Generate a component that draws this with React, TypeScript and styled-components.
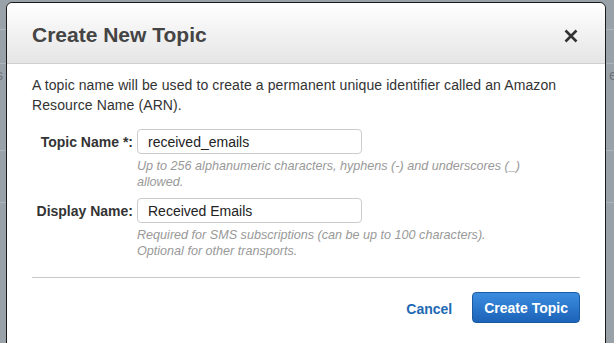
import React from "react";
import styled, { createGlobalStyle } from "styled-components";

const GlobalStyle = createGlobalStyle`
  html, body {
    margin: 0;
    padding: 0;
    background: #9aa2a9;
    font-family: "Liberation Sans", Arial, sans-serif;
  }
`;

const Backdrop = styled.div`
  position: relative;
  width: 614px;
  height: 343px;
  overflow: hidden;
  background-color: #9aa2a9;
  background-image:
    linear-gradient(#aeb4ba, #aeb4ba),
    linear-gradient(#aeb4ba, #aeb4ba),
    linear-gradient(#aeb4ba, #aeb4ba),
    linear-gradient(#aeb4ba, #aeb4ba);
  background-repeat: no-repeat;
  background-size: 100% 1px;
  background-position: 0 29px, 0 63px, 0 150px, 0 202px;
`;

const GhostText = styled.span<{ $left: number }>`
  position: absolute;
  top: 67px;
  left: ${(p) => p.$left}px;
  font-size: 14px;
  color: #6d747a;
`;

const Modal = styled.div`
  position: absolute;
  left: 6px;
  top: 2px;
  width: 600px;
  height: 360px;
  background: #fff;
  border: 1px solid #1a1a1a;
  border-radius: 6px 6px 0 0;
  box-sizing: border-box;
  display: flex;
  flex-direction: column;
`;

const Header = styled.div`
  height: 60px;
  display: flex;
  align-items: center;
  justify-content: space-between;
  padding: 0 26px 0 25px;
  background: linear-gradient(#ffffff, #e5e5e5);
  border-bottom: 1px solid #cfcfcf;
  border-radius: 6px 6px 0 0;
`;

const Title = styled.h2`
  margin: 0;
  padding-top: 3px;
  font-size: 21px;
  font-weight: bold;
  color: #444;
`;

const Close = styled.button`
  border: none;
  background: none;
  padding: 0;
  margin-top: 5px;
  width: 16px;
  height: 16px;
  cursor: pointer;
  display: flex;
`;

const Body = styled.div`
  padding: 11px 25px 0 25px;
  display: flex;
  flex-direction: column;
`;

const Intro = styled.p`
  margin: 0 0 14px;
  font-size: 14px;
  line-height: 20px;
  letter-spacing: 0.1px;
  color: #333;
`;

const Field = styled.div`
  display: grid;
  grid-template-columns: 101px 1fr;
  column-gap: 4px;
  margin-bottom: 8px;
`;

const Label = styled.label`
  text-align: right;
  font-size: 14px;
  font-weight: bold;
  color: #333;
  line-height: 26px;
`;

const Input = styled.input`
  width: 225px;
  height: 25px;
  box-sizing: border-box;
  border: 1px solid #ccc;
  border-radius: 4px;
  padding: 0 10px;
  font-family: "Liberation Sans", Arial, sans-serif;
  font-size: 14px;
  color: #222;
  outline: none;
`;

const Hint = styled.div`
  grid-column: 2;
  margin-top: 3px;
  font-size: 12.6px;
  line-height: 16px;
  font-style: italic;
  color: #999;
  max-width: 400px;
`;

const Divider = styled.hr`
  margin: 10px 0 0;
  border: none;
  border-top: 1px solid #c8c8c8;
`;

const Footer = styled.div`
  display: flex;
  justify-content: flex-end;
  align-items: center;
  gap: 20px;
  padding-top: 14px;
`;

const CancelLink = styled.a`
  font-size: 14px;
  font-weight: bold;
  color: #1e69b3;
  text-decoration: none;
  cursor: pointer;
  margin-top: 2px;
`;

const PrimaryButton = styled.button`
  height: 31px;
  padding: 0 11px;
  border: 1px solid #1b5a9e;
  border-radius: 4px;
  background: linear-gradient(#3c8de0, #1b63b8);
  color: #fff;
  font-family: "Liberation Sans", Arial, sans-serif;
  font-size: 14px;
  font-weight: bold;
  cursor: pointer;
`;

export default function App() {
  return (
    <Backdrop>
      <GlobalStyle />
      <GhostText $left={-4}>s</GhostText>
      <GhostText $left={609}>e</GhostText>
      <Modal>
        <Header>
          <Title>Create New Topic</Title>
          <Close aria-label="Close">
            <svg width="16" height="16" viewBox="0 0 16 16">
              <path
                d="M2.5 2.5 L13.5 13.5 M13.5 2.5 L2.5 13.5"
                stroke="#333"
                strokeWidth="2.6"
                strokeLinecap="butt"
              />
            </svg>
          </Close>
        </Header>
        <Body>
          <Intro>
            A topic name will be used to create a permanent unique identifier
            called an Amazon Resource Name (ARN).
          </Intro>
          <Field>
            <Label>Topic Name *:</Label>
            <Input defaultValue="received_emails" />
            <Hint>
              Up to 256 alphanumeric characters, hyphens (-) and underscores
              (_) allowed.
            </Hint>
          </Field>
          <Field>
            <Label>Display Name:</Label>
            <Input defaultValue="Received Emails" />
            <Hint>
              Required for SMS subscriptions (can be up to 100 characters).
              <br />
              Optional for other transports.
            </Hint>
          </Field>
          <Divider />
          <Footer>
            <CancelLink>Cancel</CancelLink>
            <PrimaryButton>Create Topic</PrimaryButton>
          </Footer>
        </Body>
      </Modal>
    </Backdrop>
  );
}
